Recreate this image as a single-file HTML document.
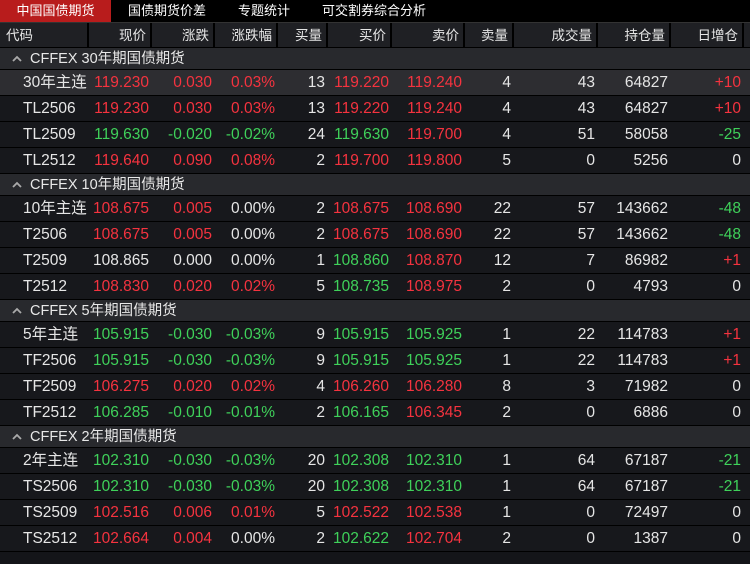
<!DOCTYPE html><html><head><meta charset="utf-8"><style>
*{margin:0;padding:0;box-sizing:border-box}
body{width:750px;height:564px;background:#141519;font-family:"Liberation Sans","Noto Sans CJK SC",sans-serif;color:#e6e6e6;overflow:hidden;position:relative}
.tabs{height:23px;background:#000;display:flex;font-size:13px;color:#fff;border-bottom:1px solid #333}
.tabs div{padding:0 16px;line-height:22px}
.tabs div:nth-child(2){padding-left:17px}
.tabs .on{background:#b81c1c;width:111px;text-align:center;padding:0}
.row{display:flex;height:26px;border-bottom:1px solid #000;background:#17181c;font-size:15.5px;line-height:25px}
.row.hl{background:#2d2d31}
.row div{text-align:right;padding-right:3px;white-space:nowrap}
.hd{height:25px;background:#1f2024;font-size:13.5px;line-height:25px;border-bottom:1px solid #000}
.hd div{border-right:2px solid #000;padding-right:4px}
.hd div:first-child{text-align:left;padding-left:6px}
.c0{width:89px}.c1{width:63px}.c2{width:63px}.c3{width:63px}.c4{width:50px}.c5{width:64px}.c6{width:73px}.c7{width:49px}.c8{width:84px}.c9{width:73px}.c10{width:73px}
.row .c0{text-align:left;padding-left:23px}
.grp{height:22px;background:#28292d;border-bottom:1px solid #000;font-size:14.5px;line-height:22px;padding-left:12px;color:#e8e8e8;display:flex;align-items:center}
.grp svg{margin-right:8px}
.r{color:#f5333f}.g{color:#3fd15a}
</style></head><body>
<div class="tabs"><div class="on">中国国债期货</div><div>国债期货价差</div><div>专题统计</div><div>可交割券综合分析</div></div>
<div class="row hd"><div class="c0">代码</div><div class="c1">现价</div><div class="c2">涨跌</div><div class="c3">涨跌幅</div><div class="c4">买量</div><div class="c5">买价</div><div class="c6">卖价</div><div class="c7">卖量</div><div class="c8">成交量</div><div class="c9">持仓量</div><div class="c10">日增仓</div></div>

<div class="grp"><svg width="10" height="7" viewBox="0 0 10 7"><path d="M1 6 L5 2 L9 6" stroke="#aaa" stroke-width="1.8" fill="none"/></svg>CFFEX 30年期国债期货</div>
<div class="row hl"><div class="c0">30年主连</div><div class="c1 r">119.230</div><div class="c2 r">0.030</div><div class="c3 r">0.03%</div><div class="c4">13</div><div class="c5 r">119.220</div><div class="c6 r">119.240</div><div class="c7">4</div><div class="c8">43</div><div class="c9">64827</div><div class="c10 r">+10</div></div>
<div class="row"><div class="c0">TL2506</div><div class="c1 r">119.230</div><div class="c2 r">0.030</div><div class="c3 r">0.03%</div><div class="c4">13</div><div class="c5 r">119.220</div><div class="c6 r">119.240</div><div class="c7">4</div><div class="c8">43</div><div class="c9">64827</div><div class="c10 r">+10</div></div>
<div class="row"><div class="c0">TL2509</div><div class="c1 g">119.630</div><div class="c2 g">-0.020</div><div class="c3 g">-0.02%</div><div class="c4">24</div><div class="c5 g">119.630</div><div class="c6 r">119.700</div><div class="c7">4</div><div class="c8">51</div><div class="c9">58058</div><div class="c10 g">-25</div></div>
<div class="row"><div class="c0">TL2512</div><div class="c1 r">119.640</div><div class="c2 r">0.090</div><div class="c3 r">0.08%</div><div class="c4">2</div><div class="c5 r">119.700</div><div class="c6 r">119.800</div><div class="c7">5</div><div class="c8">0</div><div class="c9">5256</div><div class="c10">0</div></div>

<div class="grp"><svg width="10" height="7" viewBox="0 0 10 7"><path d="M1 6 L5 2 L9 6" stroke="#aaa" stroke-width="1.8" fill="none"/></svg>CFFEX 10年期国债期货</div>
<div class="row"><div class="c0">10年主连</div><div class="c1 r">108.675</div><div class="c2 r">0.005</div><div class="c3">0.00%</div><div class="c4">2</div><div class="c5 r">108.675</div><div class="c6 r">108.690</div><div class="c7">22</div><div class="c8">57</div><div class="c9">143662</div><div class="c10 g">-48</div></div>
<div class="row"><div class="c0">T2506</div><div class="c1 r">108.675</div><div class="c2 r">0.005</div><div class="c3">0.00%</div><div class="c4">2</div><div class="c5 r">108.675</div><div class="c6 r">108.690</div><div class="c7">22</div><div class="c8">57</div><div class="c9">143662</div><div class="c10 g">-48</div></div>
<div class="row"><div class="c0">T2509</div><div class="c1">108.865</div><div class="c2">0.000</div><div class="c3">0.00%</div><div class="c4">1</div><div class="c5 g">108.860</div><div class="c6 r">108.870</div><div class="c7">12</div><div class="c8">7</div><div class="c9">86982</div><div class="c10 r">+1</div></div>
<div class="row"><div class="c0">T2512</div><div class="c1 r">108.830</div><div class="c2 r">0.020</div><div class="c3 r">0.02%</div><div class="c4">5</div><div class="c5 g">108.735</div><div class="c6 r">108.975</div><div class="c7">2</div><div class="c8">0</div><div class="c9">4793</div><div class="c10">0</div></div>

<div class="grp"><svg width="10" height="7" viewBox="0 0 10 7"><path d="M1 6 L5 2 L9 6" stroke="#aaa" stroke-width="1.8" fill="none"/></svg>CFFEX 5年期国债期货</div>
<div class="row"><div class="c0">5年主连</div><div class="c1 g">105.915</div><div class="c2 g">-0.030</div><div class="c3 g">-0.03%</div><div class="c4">9</div><div class="c5 g">105.915</div><div class="c6 g">105.925</div><div class="c7">1</div><div class="c8">22</div><div class="c9">114783</div><div class="c10 r">+1</div></div>
<div class="row"><div class="c0">TF2506</div><div class="c1 g">105.915</div><div class="c2 g">-0.030</div><div class="c3 g">-0.03%</div><div class="c4">9</div><div class="c5 g">105.915</div><div class="c6 g">105.925</div><div class="c7">1</div><div class="c8">22</div><div class="c9">114783</div><div class="c10 r">+1</div></div>
<div class="row"><div class="c0">TF2509</div><div class="c1 r">106.275</div><div class="c2 r">0.020</div><div class="c3 r">0.02%</div><div class="c4">4</div><div class="c5 r">106.260</div><div class="c6 r">106.280</div><div class="c7">8</div><div class="c8">3</div><div class="c9">71982</div><div class="c10">0</div></div>
<div class="row"><div class="c0">TF2512</div><div class="c1 g">106.285</div><div class="c2 g">-0.010</div><div class="c3 g">-0.01%</div><div class="c4">2</div><div class="c5 g">106.165</div><div class="c6 r">106.345</div><div class="c7">2</div><div class="c8">0</div><div class="c9">6886</div><div class="c10">0</div></div>

<div class="grp"><svg width="10" height="7" viewBox="0 0 10 7"><path d="M1 6 L5 2 L9 6" stroke="#aaa" stroke-width="1.8" fill="none"/></svg>CFFEX 2年期国债期货</div>
<div class="row"><div class="c0">2年主连</div><div class="c1 g">102.310</div><div class="c2 g">-0.030</div><div class="c3 g">-0.03%</div><div class="c4">20</div><div class="c5 g">102.308</div><div class="c6 g">102.310</div><div class="c7">1</div><div class="c8">64</div><div class="c9">67187</div><div class="c10 g">-21</div></div>
<div class="row"><div class="c0">TS2506</div><div class="c1 g">102.310</div><div class="c2 g">-0.030</div><div class="c3 g">-0.03%</div><div class="c4">20</div><div class="c5 g">102.308</div><div class="c6 g">102.310</div><div class="c7">1</div><div class="c8">64</div><div class="c9">67187</div><div class="c10 g">-21</div></div>
<div class="row"><div class="c0">TS2509</div><div class="c1 r">102.516</div><div class="c2 r">0.006</div><div class="c3 r">0.01%</div><div class="c4">5</div><div class="c5 r">102.522</div><div class="c6 r">102.538</div><div class="c7">1</div><div class="c8">0</div><div class="c9">72497</div><div class="c10">0</div></div>
<div class="row"><div class="c0">TS2512</div><div class="c1 r">102.664</div><div class="c2 r">0.004</div><div class="c3">0.00%</div><div class="c4">2</div><div class="c5 g">102.622</div><div class="c6 r">102.704</div><div class="c7">2</div><div class="c8">0</div><div class="c9">1387</div><div class="c10">0</div></div>
</body></html>
